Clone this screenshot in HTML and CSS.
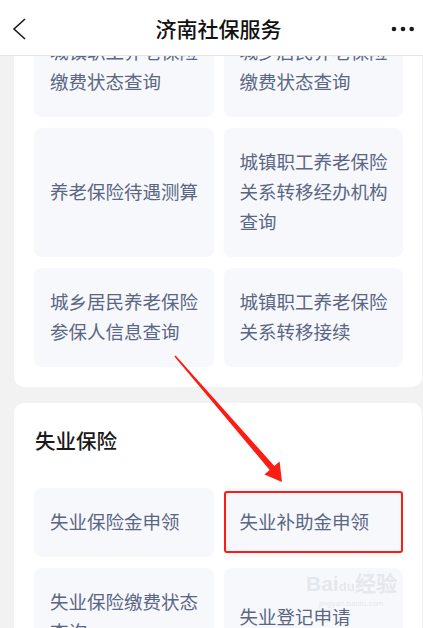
FILE: index.html
```html
<!DOCTYPE html>
<html lang="zh-CN">
<head>
<meta charset="utf-8">
<title>济南社保服务</title>
<link rel="stylesheet" href="styles.css">
</head>
<body>
<div class="app">
  <header class="topbar">
    <svg class="back" width="16" height="24" viewBox="0 0 16 24"><path d="M13 2 L2 12 L13 22" fill="none" stroke="#1a1a1a" stroke-width="1.6"/></svg>
    <h1 class="title">济南社保服务</h1>
    <svg class="more" width="24" height="8" viewBox="0 0 24 8"><circle cx="3" cy="4" r="2.3" fill="#1a1a1a"/><circle cx="12" cy="4" r="2.3" fill="#1a1a1a"/><circle cx="20.7" cy="4" r="2.3" fill="#1a1a1a"/></svg>
  </header>
  <main class="scroll">
    <section class="card card-first">
      <div class="grid">
        <div class="tile"><span>城镇职工养老保险缴费状态查询</span></div>
        <div class="tile"><span>城乡居民养老保险缴费状态查询</span></div>
        <div class="tile"><span>养老保险待遇测算</span></div>
        <div class="tile"><span>城镇职工养老保险关系转移经办机构查询</span></div>
        <div class="tile"><span>城乡居民养老保险参保人信息查询</span></div>
        <div class="tile"><span>城镇职工养老保险关系转移接续</span></div>
      </div>
    </section>
    <section class="card">
      <h2 class="card-title">失业保险</h2>
      <div class="grid">
        <div class="tile"><span>失业保险金申领</span></div>
        <div class="tile tile-marked"><span>失业补助金申领</span></div>
        <div class="tile"><span>失业保险缴费状态查询</span></div>
        <div class="tile"><span>失业登记申请</span></div>
      </div>
    </section>
  </main>
  <svg class="arrow" width="423" height="628" viewBox="0 0 423 628"><polygon points="174.4,356.5 175.6,355.5 274.3,466 279.6,461.5 282,482 264.4,474.5 269.7,470" fill="#fb1c14"/></svg>
  <div class="watermark"><span class="wm-big">Bai<span class="wm-du">du</span>经验</span><span class="wm-small">jingyan.baidu.com</span></div>
</div>
</body>
</html>
```
FILE: styles.css
```css
* { box-sizing: border-box; }
html, body { margin: 0; padding: 0; }
body {
  background: #f2f2f2;
  font-family: "Noto Sans CJK SC", "Noto Sans", sans-serif;
}
.app {
  position: relative;
  width: 423px;
  height: 628px;
  overflow: hidden;
  display: flex;
  flex-direction: column;
}
.topbar {
  height: 56px;
  flex: none;
  background: #fff;
  border-bottom: 1px solid #e4e4e4;
  display: flex;
  align-items: center;
  justify-content: space-between;
  padding: 0 8px 0 12px;
}
.back { display: block; margin-top: 2px; }
.more { display: block; margin-top: 2px; }
.title {
  margin: 0 0 0 18px;
  font-size: 21px;
  font-weight: 500;
  color: #111;
  line-height: 28px;
}
.scroll {
  flex: 1;
  overflow: hidden;
}
.card {
  background: #fff;
  margin: 0 1px 16px 14px;
  border-radius: 10px;
  padding: 22px 19px 20px 20px;
}
.card-first {
  margin-top: -60px;
}
.card-title {
  margin: 0 0 33px 1px;
  font-size: 20.5px;
  line-height: 30px;
  font-weight: 500;
  color: #1a1a1a;
}
.grid {
  display: grid;
  grid-template-columns: 1fr 1fr;
  column-gap: 10px;
  row-gap: 11px;
}
.tile {
  position: relative;
  background: #f7f8fb;
  border-radius: 8px;
  padding: 17.5px 10px 21.5px 16px;
  display: flex;
  align-items: center;
  color: #5a6684;
  font-size: 18.5px;
  line-height: 30px;
}
.tile span { max-width: 150px; }
.tile-marked::after {
  content: "";
  position: absolute;
  left: 0;
  right: 0;
  top: 3px;
  height: 58px;
  border: 2.5px solid #fb1c14;
  border-radius: 3px;
}
.arrow {
  position: absolute;
  left: 0;
  top: 0;
  pointer-events: none;
}
.watermark {
  position: absolute;
  left: 306px;
  top: 572px;
  display: flex;
  flex-direction: column;
  align-items: center;
  color: rgba(205, 210, 220, 0.45);
  font-family: "Liberation Sans", sans-serif;
  pointer-events: none;
}
.wm-big { font-size: 21px; font-weight: bold; line-height: 24px; }
.wm-du { font-size: 13px; }
.wm-small { font-size: 8px; line-height: 10px; }
```
